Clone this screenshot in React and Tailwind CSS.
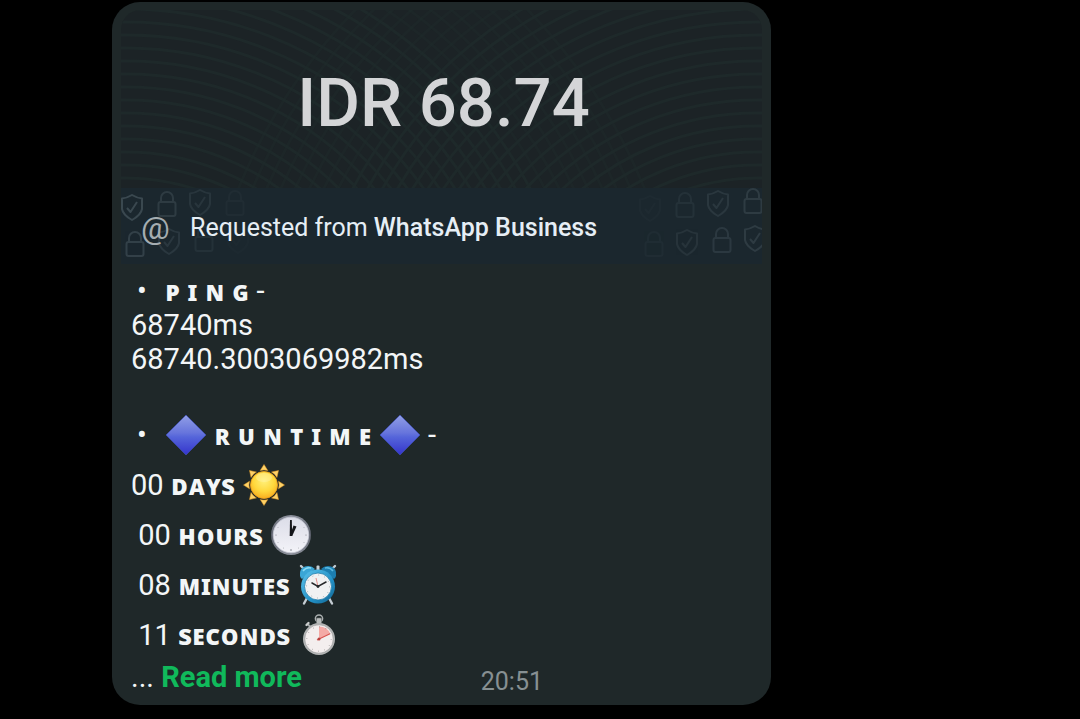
import React from 'react';

const radii = Array.from({ length: 41 }, (_, i) => 40 + i * 13);

function WavePattern() {
  return (
    <svg
      className="absolute inset-0 h-full w-full"
      viewBox="0 0 641 178"
      preserveAspectRatio="xMidYMid slice"
      aria-hidden="true"
    >
      <g fill="none" stroke="#1e292a" strokeWidth="3">
        {radii.map((r) => (
          <circle key={'l' + r} cx="5" cy="390" r={r} opacity={r > 460 ? 0.5 : 1} />
        ))}
        {radii.map((r) => (
          <circle key={'r' + r} cx="636" cy="390" r={r} opacity={r > 460 ? 0.5 : 1} />
        ))}
      </g>
    </svg>
  );
}

function Shield({ x, y, o }) {
  return (
    <g transform={`translate(${x} ${y})`} opacity={o}>
      <path d="M0 -12 Q5 -9 10 -8.500 V2 Q9 8 0 13 Q-9 8 -10 2 V-8.500 Q-5 -9 0 -12Z" />
      <path d="M-5 1 L-1.500 5 L5 -5" />
    </g>
  );
}

function Lock({ x, y, o }) {
  return (
    <g transform={`translate(${x} ${y})`} opacity={o}>
      <rect x="-8.500" y="-2" width="17" height="14" rx="2" />
      <path d="M-6 -2 V-6 A6 6 0 0 1 6 -6 V-2" />
    </g>
  );
}

function LeftMarks() {
  return (
    <svg className="absolute left-0 top-0" width="140" height="76" aria-hidden="true">
      <g fill="none" stroke="#4b5a62" strokeWidth="2" strokeLinejoin="round">
        <Shield x={11} y={19} o={0.65} />
        <Lock x={46} y={16} o={0.4} />
        <Shield x={79} y={14} o={0.28} />
        <Lock x={114} y={15} o={0.1} />
        <Lock x={14} y={56} o={0.5} />
        <Shield x={48} y={53} o={0.33} />
        <Lock x={83} y={51} o={0.2} />
        <Shield x={117} y={52} o={0.05} />
      </g>
    </svg>
  );
}

function RightMarks() {
  return (
    <svg className="absolute right-0 top-0" width="140" height="76" aria-hidden="true">
      <g fill="none" stroke="#4b5a62" strokeWidth="2" strokeLinejoin="round">
        <Shield x={28} y={20} o={0.07} />
        <Lock x={63} y={17} o={0.2} />
        <Shield x={96} y={15} o={0.32} />
        <Lock x={131} y={13} o={0.4} />
        <Lock x={32} y={56} o={0.1} />
        <Shield x={65} y={54} o={0.25} />
        <Lock x={100} y={52} o={0.35} />
        <Shield x={133} y={50} o={0.4} />
      </g>
    </svg>
  );
}

function Emoji({ label, children }) {
  return (
    <svg className="inline-block align-[-11px]" width="42" height="42" viewBox="0 0 42 42" role="img" aria-label={label}>
      {children}
    </svg>
  );
}

function Diamond({ id }) {
  return (
    <Emoji label="Blue diamond">
      <defs>
        <linearGradient id={id} x1="0" y1="0" x2="0" y2="1">
          <stop offset="0" stopColor="#929fe6" />
          <stop offset="0.45" stopColor="#6674dc" />
          <stop offset="0.55" stopColor="#5565da" />
          <stop offset="1" stopColor="#3434cc" />
        </linearGradient>
      </defs>
      <path d="M21 1 L41 21 L21 41 L1 21Z" fill={`url(#${id})`} stroke="#3e4fb4" strokeWidth="0.7" />
    </Emoji>
  );
}

function Sun() {
  return (
    <Emoji label="Sun">
      <defs>
        <radialGradient id="sun" cx="0.5" cy="0.35" r="0.65">
          <stop offset="0" stopColor="#fff07a" />
          <stop offset="0.6" stopColor="#ffd83c" />
          <stop offset="1" stopColor="#f9ae1f" />
        </radialGradient>
      </defs>
      {[0, 45, 90, 135, 180, 225, 270, 315].map((a) => (
        <path key={a} d="M21 0.500 L24.800 6.500 Q21 5.300 17.200 6.500Z" fill="#fdd268" stroke="#e79a22" strokeWidth="0.5" transform={`rotate(${a} 21 21)`} />
      ))}
      <circle cx="21" cy="21" r="13.500" fill="url(#sun)" stroke="#efa11c" strokeWidth="0.8" />
      <ellipse cx="21" cy="13.500" rx="8" ry="4.500" fill="#fff6b0" opacity="0.4" />
    </Emoji>
  );
}

function Clock() {
  return (
    <Emoji label="One o'clock">
      <defs>
        <linearGradient id="clock-rim" x1="0" y1="0" x2="0" y2="1">
          <stop offset="0" stopColor="#8b8f9b" />
          <stop offset="0.5" stopColor="#5d616d" />
          <stop offset="1" stopColor="#8c909a" />
        </linearGradient>
        <linearGradient id="clock-face" x1="0" y1="0" x2="0" y2="1">
          <stop offset="0" stopColor="#dcdde8" />
          <stop offset="1" stopColor="#f3f3f8" />
        </linearGradient>
      </defs>
      <circle cx="21" cy="21" r="20" fill="url(#clock-rim)" />
      <circle cx="21" cy="21" r="17.800" fill="url(#clock-face)" stroke="#c6c9d4" strokeWidth="0.8" />
      <g fill="#7c7f88">
        <circle cx="21" cy="36" r="0.8" />
        <circle cx="36" cy="21" r="0.6" />
        <circle cx="6" cy="21" r="0.6" />
        <circle cx="28.500" cy="34" r="0.4" />
        <circle cx="13.500" cy="34" r="0.4" />
        <circle cx="8" cy="28.500" r="0.4" />
        <circle cx="34" cy="28.500" r="0.4" />
        <circle cx="8" cy="13.500" r="0.4" />
        <circle cx="34" cy="13.500" r="0.4" />
      </g>
      <path d="M19.700 22 L20 6 L21.800 6 L22.200 22Z" fill="#15161a" />
      <path d="M20 21.500 L23.500 11.500 L26.500 12.500 L22.200 22Z" fill="#15161a" />
    </Emoji>
  );
}

function AlarmClock() {
  return (
    <Emoji label="Alarm clock">
      <defs>
        <linearGradient id="alarm-body" x1="0" y1="0" x2="1" y2="1">
          <stop offset="0" stopColor="#5cc3ec" />
          <stop offset="0.6" stopColor="#2391c6" />
          <stop offset="1" stopColor="#11638f" />
        </linearGradient>
      </defs>
      <g stroke="#c4ccd2" strokeWidth="2.400" strokeLinecap="round">
        <path d="M10 34 L7 39.500" />
        <path d="M32 34 L35 39.500" />
        <path d="M6 4 L4 2" />
        <path d="M36 4 L38 2" />
      </g>
      <path d="M3 12 Q2 4 8 2.500 Q14 1 18 5 L5 15 Q3.500 14 3 12Z" fill="#3aa6d6" />
      <path d="M39 12 Q40 4 34 2.500 Q28 1 24 5 L37 15 Q38.500 14 39 12Z" fill="#1c7eb0" />
      <path d="M6 7 Q9 3 14 4" stroke="#8bdcf6" strokeWidth="1.500" fill="none" />
      <path d="M28 4 Q33 3 36 7" stroke="#5bb9e0" strokeWidth="1.500" fill="none" />
      <rect x="19.500" y="1.500" width="3" height="6" rx="1" fill="#c7d0d6" />
      <circle cx="21" cy="22.500" r="17" fill="url(#alarm-body)" />
      <circle cx="21" cy="22.500" r="13.500" fill="#f0f1f2" stroke="#1d7cab" strokeWidth="0.8" />
      <circle cx="21" cy="22.500" r="11.500" fill="none" stroke="#9a9ea2" strokeWidth="1" strokeDasharray="0.8 5.222" />
      <path d="M21 22.500 L19 14" stroke="#dd7770" strokeWidth="0.8" />
      <path d="M15 19 L21 22.500 L29 18" fill="none" stroke="#26282a" strokeWidth="1.500" strokeLinecap="round" />
      <circle cx="21" cy="22.500" r="1.400" fill="#26282a" />
    </Emoji>
  );
}

function Stopwatch() {
  return (
    <Emoji label="Stopwatch">
      <circle cx="21" cy="4.500" r="3.600" fill="none" stroke="#a9aeae" strokeWidth="1.500" />
      <rect x="18.500" y="4" width="5" height="6" rx="1" fill="#b9bdbd" stroke="#6c7171" strokeWidth="0.6" />
      <path d="M10 10.500 L13 13.500" stroke="#a5aaaa" strokeWidth="2" />
      <path d="M8.500 11 L10.500 9" stroke="#c9cccc" strokeWidth="2.400" strokeLinecap="round" />
      <circle cx="21" cy="25" r="16" fill="#b2b4b4" />
      <circle cx="21" cy="25" r="14.200" fill="#f3eeee" stroke="#8d8f8f" strokeWidth="0.5" />
      <path d="M21 25 V12.500 A12.500 12.500 0 0 1 32.300 19.700Z" fill="#f4aaa6" />
      <circle cx="21" cy="25" r="12.200" fill="none" stroke="#8f8a8a" strokeWidth="1" strokeDasharray="0.7 5.688" />
      <path d="M19 26 L32 19.700" stroke="#d9534f" strokeWidth="1.100" />
      <circle cx="21" cy="25" r="1.500" fill="#b8403e" />
    </Emoji>
  );
}

function Caps({ children }) {
  return <b className="font-['Noto_Sans',sans-serif] text-[28px] font-extrabold leading-none">{children}</b>;
}

function Bullet() {
  return <span className="inline-block w-[34px] pl-[6px]">•</span>;
}

function Row({ children }) {
  return <p className="h-[50px] whitespace-pre leading-[50px]">{children}</p>;
}

export default function App() {
  return (
    <main className="min-h-screen bg-black pl-28 pt-0.5 font-[Roboto,sans-serif]">
      <article className="w-full max-w-[659px] overflow-hidden rounded-[28px] bg-[#1f2829] px-[9px] pb-[9px] pt-2 text-[29px] leading-[34px] text-[#f3f6f7]">
        <header className="relative flex h-[178px] items-center justify-center overflow-hidden rounded-t-[20px] bg-[#1c2326] pl-1 pt-2">
          <WavePattern />
          <h1 className="relative text-[67px] font-medium leading-[80px] text-[#d4d5d7]">IDR 68.74</h1>
        </header>

        <section className="relative flex h-[76px] items-center bg-[#1b272e] pl-5 pt-1 text-[25px]">
          <LeftMarks />
          <RightMarks />
          <span className="relative w-[49px] text-[32px] leading-[38px] text-[#a5adb1]">@</span>
          <p className="relative text-[#e6eef5]">
            Requested from <span className="font-medium">WhatsApp Business</span>
          </p>
        </section>

        <div className="px-2.5 pt-[10px]">
          <p className="h-[34px] whitespace-pre"><Bullet /><Caps>ᴘ ɪ ɴ ɢ</Caps> -</p>
          <p>68740ms</p>
          <p>68740.3003069982ms</p>
          <p className="h-[34px]" />
          <Row><Bullet /><Diamond id="diamond-a" /> <Caps>ʀ ᴜ ɴ ᴛ ɪ ᴍ ᴇ</Caps> <Diamond id="diamond-b" /> -</Row>
          <Row>00 <Caps>ᴅᴀʏs</Caps> <Sun /></Row>
          <Row> 00 <Caps>ʜᴏᴜʀs</Caps> <Clock /></Row>
          <Row> 08 <Caps>ᴍɪɴᴜᴛᴇs</Caps> <AlarmClock /></Row>
          <Row> 11 <Caps>sᴇᴄᴏɴᴅs</Caps> <Stopwatch /></Row>
          <footer className="flex justify-between pr-[209px]">
            <p>
              ... <a href="#more" className="font-bold text-[#10b95b]">Read more</a>
            </p>
            <time className="pt-2 text-[25px] leading-[28px] text-[#879092]">20:51</time>
          </footer>
        </div>
      </article>
    </main>
  );
}
